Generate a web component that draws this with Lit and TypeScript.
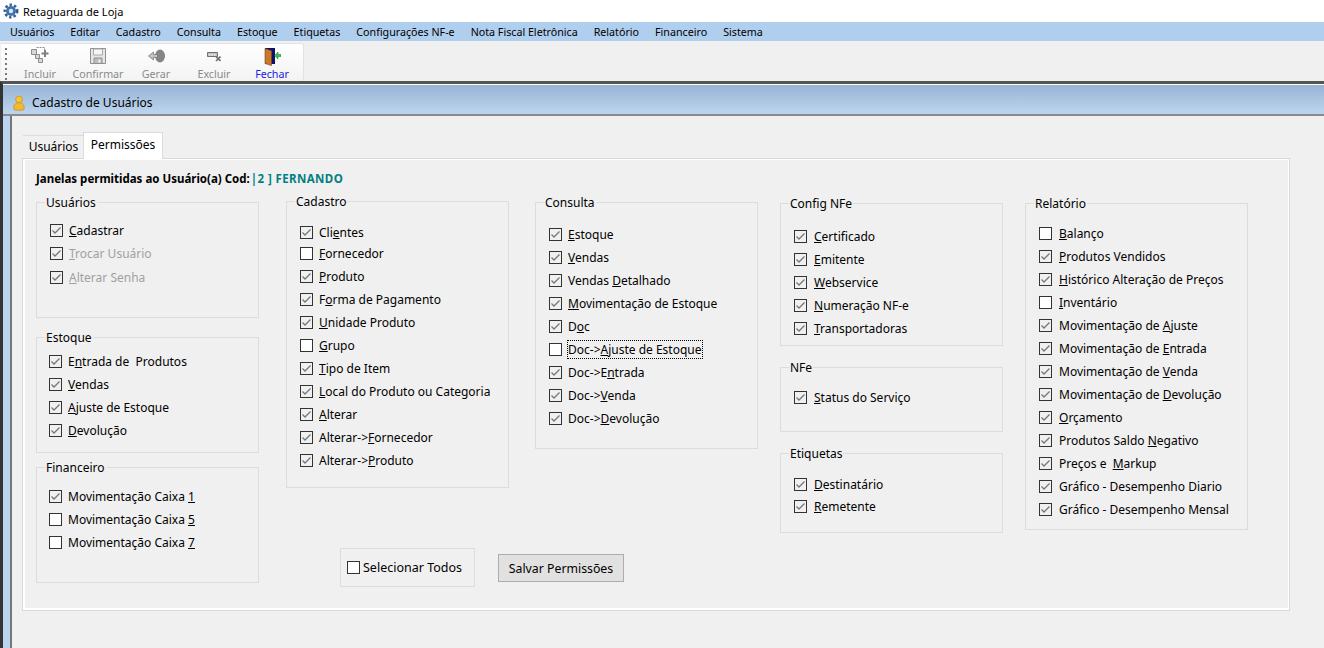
import { LitElement, html, css, svg } from "lit";
import { customElement } from "lit/decorators.js";

// "&" marks the access key of a label, as in the original form
type Item = [label: string, checked: boolean, dy?: number];

interface Group {
    title: string;
    height: number; // visible box height, the legend adds 7px above it
    pad: number;
    top?: number;
    inset?: number;
    labelGap?: number;
    pitch?: number;
    disabledFrom?: number;
    focus?: number;
    gapAfter?: number;
    items: Item[];
}

const MENU = ["Usuários", "Editar", "Cadastro", "Consulta", "Estoque", "Etiquetas", "Configurações NF-e", "Nota Fiscal Eletrônica", "Relatório", "Financeiro", "Sistema"];

const col1: Group[] = [
    { title: "Usuários", height: 116, pad: 10, disabledFrom: 1, gapAfter: 12, items: [["&Cadastrar", true], ["&Trocar Usuário", true], ["&Alterar Senha", true, 1]] },
    { title: "Estoque", height: 116, pad: 6, inset: 12, gapAfter: 7, items: [["E&ntrada de  Produtos", true], ["&Vendas", true], ["&Ajuste de Estoque", true], ["&Devolução", true]] },
    { title: "Financeiro", height: 116, pad: 11, inset: 12, items: [["Movimentação Caixa &1", true], ["Movimentação Caixa &5", false], ["Movimentação Caixa &7", false]] },
];
const col2: Group[] = [
    { title: "Cadastro", height: 287, pad: 13, top: -1, items: [["Cli&entes", true], ["&Fornecedor", false, -2], ["&Produto", true], ["F&orma de Pagamento", true], ["&Unidade Produto", true], ["&Grupo", false], ["&Tipo de Item", true], ["&Local do Produto ou Categoria", true], ["&Alterar", true], ["Alterar->&Fornecedor", true], ["Alterar->&Produto", true]] },
];
const col3: Group[] = [
    { title: "Consulta", height: 247, pad: 14, focus: 5, items: [["&Estoque", true], ["&Vendas", true], ["Vendas &Detalhado", true], ["&Movimentação de Estoque", true], ["D&oc", true], ["Doc->&Ajuste de Estoque", false], ["Doc->E&ntrada", true], ["Doc->&Venda", true], ["Doc->&Devolução", true]] },
];
const col4: Group[] = [
    { title: "Config NFe", height: 143, pad: 15, top: 1, labelGap: 7, gapAfter: 14, items: [["&Certificado", true], ["&Emitente", true], ["&Webservice", true], ["&Numeração NF-e", true], ["&Transportadoras", true]] },
    { title: "NFe", height: 65, pad: 12, labelGap: 7, gapAfter: 14, items: [["&Status do Serviço", true]] },
    { title: "Etiquetas", height: 80, pad: 13, pitch: 22, labelGap: 7, items: [["&Destinatário", true], ["&Remetente", true]] },
];
const col5: Group[] = [
    { title: "Relatório", height: 327, pad: 12, top: 1, labelGap: 7, items: [["&Balanço", false], ["&Produtos Vendidos", true], ["&Histórico Alteração de Preços", true], ["&Inventário", false], ["Movimentação de &Ajuste", true], ["Movimentação de &Entrada", true], ["Movimentação de &Venda", true], ["Movimentação de &Devolução", true], ["&Orçamento", true], ["Produtos Saldo &Negativo", true], ["Preços e  &Markup", true], ["Gráfico - Desempenho Diario", true], ["Gráfico - Desempenho Mensal", true]] },
];

const gear = svg`<svg width="16" height="16" viewBox="0 0 16 16"><circle cx="8" cy="8" r="6.2" fill="none" stroke="#2f5f94" stroke-width="2.6" stroke-dasharray="2.4 2.1"/><circle cx="8" cy="8" r="5" fill="#3f74ab"/><circle cx="8" cy="8" r="2.2" fill="#dce8f4"/></svg>`;
const userIcon = svg`<svg width="12" height="16" viewBox="0 0 12 16"><circle cx="6" cy="4.500" r="3.400" fill="#f3c53c" stroke="#c8922a" stroke-width=".8"/><path d="M1 14.500c-.7-4.500 1.200-6.800 5-6.800s5.700 2.300 5 6.800c-1.800 1.100-8.200 1.100-10 0z" fill="#f0b92e" stroke="#c8922a" stroke-width=".8"/></svg>`;
const icons = {
    add: svg`<svg width="20" height="20" viewBox="0 0 20 20" fill="#d8d8d8" stroke="#8c8c8c"><path d="M1.500 3.500h5v5h-5zM5.500 8.500h4v4h-4zM8.500 12.500h4v4h-4z"/><path d="M6.500 1.500h8v4" fill="none" stroke-dasharray="2 1"/><path d="M15 4v7M11.500 7.500h7" fill="none" stroke="#808080" stroke-width="2"/></svg>`,
    save: svg`<svg width="16" height="16" viewBox="0 0 16 16"><path d="M.5.5h15v15H.5z" fill="#e6e6e6" stroke="#8f8f8f"/><path d="M3.500 1h9v6h-9z" fill="#f6f6f6" stroke="#a8a8a8"/><path d="M4 10h8v5.500H4z" fill="#bdbdbd" stroke="#8f8f8f"/><path d="M8.500 11.500h2v3h-2z" fill="#f0f0f0"/></svg>`,
    back: svg`<svg width="17" height="14" viewBox="0 0 17 14"><ellipse cx="12" cy="7" rx="5" ry="6.500" fill="#858585"/><path d="M.5 7l5-4v2.500h4v3h-4V11z" fill="#c2c2c2" stroke="#7c7c7c" stroke-width=".8"/></svg>`,
    del: svg`<svg width="14" height="11" viewBox="0 0 14 11"><path d="M.5 1.500h10v4H.5z" fill="#bfbfbf" stroke="#707070"/><path d="M2 3h1.500v1.500H2zM4.500 3H6v1.500H4.500zM7 3h1.500v1.500H7z" fill="#efefef"/><path d="M9 5.500l4.500 4.500M13.500 5.500L9 10" stroke="#6f6f6f" stroke-width="1.700"/></svg>`,
    exit: svg`<svg width="17" height="19" viewBox="0 0 17 19"><path d="M1 1h10v16H1z" fill="#10106c"/><path d="M1 1.500l6.500 2.200V18.500L1 16.500z" fill="#c9772a" stroke="#7a4516" stroke-width=".6"/><path d="M17 7.500h-3V5l-3.500 3.500 3.500 3.500V9.500h3z" fill="#3cc04a" stroke="#1f7a2a" stroke-width=".5"/></svg>`,
};
const TOOLS = [
    { label: "Incluir", icon: icons.add },
    { label: "Confirmar", icon: icons.save },
    { label: "Gerar", icon: icons.back },
    { label: "Excluir", icon: icons.del },
    { label: "Fechar", icon: icons.exit, active: true },
];

function accessKey(label: string) {
    const i = label.indexOf("&");
    if (i < 0) return label;
    return html`${label.slice(0, i)}<u>${label[i + 1]}</u>${label.slice(i + 2)}`;
}

function box(checked: boolean) {
    return html`<span class="box ${checked ? "on" : ""}">${checked
        ? svg`<svg width="11" height="11" viewBox="0 0 11 11"><path d="M1.500 5.500l2.500 2.500 5.500-5.500" fill="none" stroke="#767676" stroke-width="1.300"/></svg>`
        : ""}</span>`;
}

@customElement("app-root")
export class AppRoot extends LitElement {
    static override styles = css`
      :host {
        display: block;
        width: 1324px;
        height: 648px;
        overflow: hidden;
        background: #f0f0f0;
        font-family: "Noto Sans", sans-serif;
        font-size: 12px;
        color: #000;
      }
      .caption {
        height: 22px;
        display: flex;
        align-items: center;
        gap: 4px;
        padding-left: 3px;
        background: #fff;
        font-size: 11px;
      }
      .caption svg { display: block; }
      .menu {
        height: 19px;
        display: flex;
        align-items: center;
        gap: 16px;
        padding-left: 10px;
        background: #b0cfee;
        font-size: 10.700px;
      }
      .toolstrip {
        height: 40px;
        padding: 2px 0 0 1px;
        box-sizing: border-box;
      }
      .tools {
        width: 303px;
        height: 38px;
        box-sizing: border-box;
        display: flex;
        padding-left: 10px;
        background: linear-gradient(#fff, #f3f3f3);
        border-top: 1px solid #e2e2e2;
        border-right: 1px solid #e2e2e2;
        border-radius: 0 3px 3px 0;
        position: relative;
      }
      .grip {
        position: absolute;
        left: 4px;
        top: 4px;
        bottom: 0;
        width: 2px;
        background: repeating-linear-gradient(#777 0 2px, transparent 2px 5px);
      }
      .tool {
        width: 58px;
        display: flex;
        flex-direction: column;
        align-items: center;
        color: #8a8a8a;
        font-size: 10.700px;
      }
      .tool.active { color: #2020e0; }
      .tool .ic {
        height: 22px;
        display: flex;
        align-items: center;
        justify-content: center;
        margin-top: 1px;
      }
      .mdi {
        border-top: 3px solid #555;
        border-left: 3px solid #333;
      }
      .window {
        height: 564px;
        background: #bad3ee;
        border-top: 1px solid #fff;
      }
      .title {
        height: 29px;
        box-sizing: content-box;
        display: flex;
        align-items: center;
        gap: 7px;
        padding-left: 10px;
        background: linear-gradient(#98b4d4, #bcd5ef);
        border-bottom: 2px solid #8a8a8a;
        font-size: 12px;
      }
      .title > * { position: relative; top: 3px; }
      .body {
        margin-left: 7px;
        height: 533px;
        box-sizing: border-box;
        border-left: 2px solid #777;
        background: #f0f0f0;
        padding: 16px 0 0 10px;
      }
      .tabs {
        display: flex;
        align-items: flex-end;
        height: 26px;
        padding-left: 1px;
        font-size: 12px;
      }
      .tab {
        height: 23px;
        width: 60px;
        box-sizing: border-box;
        text-align: center;
        text-indent: 1px;
        line-height: 22px;
        border-top: 1px solid #dcdcdc;
      }
      .tab.current {
        position: relative;
        z-index: 1;
        width: 80px;
        height: 27px;
        line-height: 23px;
        text-indent: 0;
        background: #fff;
        border: 1px solid #dcdcdc;
        border-bottom: none;
        margin-bottom: -1px;
      }
      .panel {
        width: 1268px;
        height: 453px;
        box-sizing: border-box;
        border: 1px solid #d9d9d9;
        box-shadow: inset 2px -2px 0 #fff, inset -1px 1px 0 #fff;
        padding: 12px 0 0 13px;
      }
      .heading {
        height: 24px;
        font-size: 11.500px;
        font-weight: 700;
        line-height: 16px;
        display: flex;
        gap: 1px;
      }
      .heading span { color: #008080; letter-spacing: 0.4px; }
      .grid {
        display: grid;
        grid-template-columns: 250px 249px 245px 245px 223px;
        grid-template-rows: auto 1fr;
      }
      .stack { grid-row: span 2; }
      .actions {
        grid-column: span 2;
        display: flex;
        align-items: center;
        gap: 23px;
        margin: 60px 0 0 54px;
      }
      .group {
        width: 223px;
        box-sizing: border-box;
        margin: 0;
        padding: 0;
        border: 1px solid #dcdcdc;
        min-inline-size: 0;
      }
      .group legend {
        margin-left: 8px;
        padding: 0 1px;
        line-height: 14px;
        transform: translateY(1px);
      }
      .row {
        height: 23px;
        display: flex;
        align-items: center;
        white-space: pre;
      }
      .row.off { color: #a0a0a0; }
      .row.focus .text { outline: 1px dotted #000; }
      .box {
        flex: none;
        width: 13px;
        height: 13px;
        box-sizing: border-box;
        border: 1px solid #333;
        background: #fff;
      }
      .box.on { background: #f0f0f0; }
      .box svg { display: block; }
      .select-all {
        width: 135px;
        height: 39px;
        box-sizing: border-box;
        border: 1px solid #dcdcdc;
        display: flex;
        align-items: center;
        gap: 3px;
        padding-left: 6px;
        font-size: 12.500px;
      }
      button {
        width: 126px;
        height: 28px;
        margin-top: 1px;
        padding: 0;
        background: #e1e1e1;
        border: 1px solid #adadad;
        font: inherit;
        font-size: 12.300px;
        color: #000;
      }
    `;

    renderGroup(g: Group) {
        return html`<fieldset class="group" style="height:${g.height + 7}px;margin-top:${g.top ?? 0}px;margin-bottom:${g.gapAfter ?? 0}px">
            <legend>${g.title}</legend>
            <div style="padding:${g.pad}px 0 0 ${g.inset ?? 13}px">
                ${g.items.map(([label, checked, dy], i) => html`
                    <div class="row ${g.disabledFrom !== undefined && i >= g.disabledFrom ? "off" : ""} ${g.focus === i ? "focus" : ""}"
                         style="height:${g.pitch ?? 23}px;margin-top:${dy ?? 0}px;gap:${g.labelGap ?? 6}px">
                        ${box(checked)}<span class="text">${accessKey(label)}</span>
                    </div>`)}
            </div>
        </fieldset>`;
    }

    override render() {
        return html`
            <div class="caption">${gear}<span>Retaguarda de Loja</span></div>
            <div class="menu">${MENU.map((m) => html`<span>${m}</span>`)}</div>
            <div class="toolstrip">
                <div class="tools">
                    <div class="grip"></div>
                    ${TOOLS.map((t) => html`<div class="tool ${t.active ? "active" : ""}"><div class="ic">${t.icon}</div>${t.label}</div>`)}
                </div>
            </div>
            <div class="mdi">
                <div class="window">
                    <div class="title">${userIcon}<span>Cadastro de Usuários</span></div>
                    <div class="body">
                        <div class="tabs">
                            <div class="tab">Usuários</div>
                            <div class="tab current">Permissões</div>
                        </div>
                        <div class="panel">
                            <div class="heading">Janelas permitidas ao Usuário(a) Cod:<span>|2 ] FERNANDO</span></div>
                            <div class="grid">
                                <div class="stack">${col1.map((g) => this.renderGroup(g))}</div>
                                <div>${col2.map((g) => this.renderGroup(g))}</div>
                                <div>${col3.map((g) => this.renderGroup(g))}</div>
                                <div class="stack">${col4.map((g) => this.renderGroup(g))}</div>
                                <div class="stack">${col5.map((g) => this.renderGroup(g))}</div>
                                <div class="actions">
                                    <div class="select-all">${box(false)}<span>Selecionar Todos</span></div>
                                    <button>Salvar Permissões</button>
                                </div>
                            </div>
                        </div>
                    </div>
                </div>
            </div>
        `;
    }
}
